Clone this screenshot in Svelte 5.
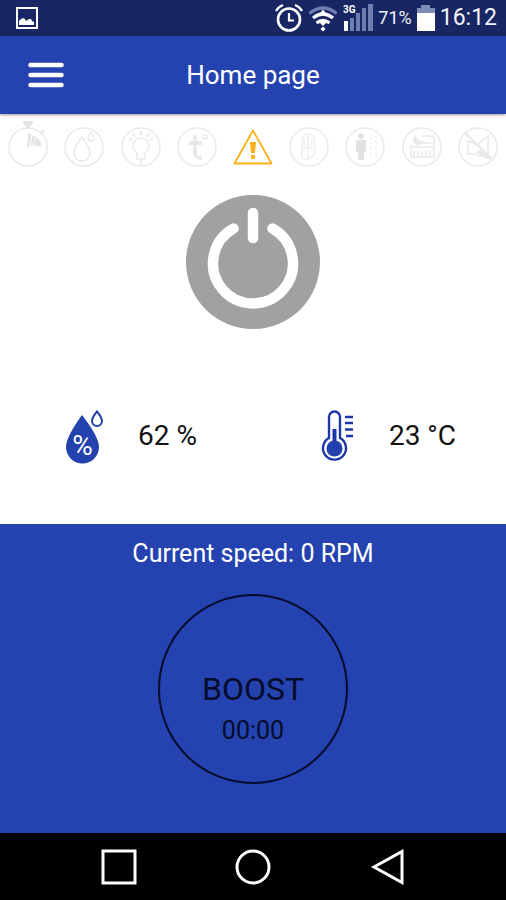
<script>
  const speed = 0;
  const humidity = 62;
  const temperature = 23;
  const indicators = ['timer', 'humidity', 'light', 'temperature', 'alarm', 'air', 'motion', 'schedule', 'mute'];
</script>

<div class="screen">
  <div class="status">
    <svg class="picture" width="22" height="22" viewBox="0 0 22 22" aria-label="Picture">
      <rect x="1" y="1" width="20" height="20" fill="none" stroke="#fff" stroke-width="2" />
      <path d="M3 18v-4l2-2 2-1 2 1 1 2 3-2 2 0 1 2 2 1v3z" fill="#fff" />
    </svg>
    <div class="status-right">
      <svg width="28" height="28" viewBox="0 0 28 28" aria-label="Alarm">
        <g fill="none" stroke="#fff" stroke-width="2.6">
          <circle cx="14" cy="15.5" r="11" />
          <path d="M14 9v7.500h5M1 7q2-4 7-6M27 7q-2-4-7-6" stroke-width="2.200" />
        </g>
      </svg>
      <svg width="30" height="28" viewBox="0 0 30 28" aria-label="Wi-Fi">
        <g fill="none" stroke="#fff" stroke-width="3.200">
          <path d="M1.500 9.500q13.500-11 27 0" stroke="#6f7db0" />
          <path d="M5 14q10-8 20 0M8.500 19q6.500-5 13 0" />
        </g>
        <path d="M15 5.500l-4.500 5.500h9zM15 22l-4-4h8zM15 22.500l2.500 2.500-2.500 2.500-2.500-2.500z" fill="#fff" />
      </svg>
      <svg width="30" height="28" viewBox="0 0 30 28" aria-label="Mobile signal">
        <g fill="#6f7db0">
          <rect x="7" y="14" width="4" height="13" /><rect x="13" y="9" width="4" height="18" />
          <rect x="19" y="4" width="4" height="23" /><rect x="25" y="0" width="5" height="27" />
        </g>
        <rect x="1" y="17" width="4" height="10" fill="#fff" />
        <text x="0" y="9" font-size="10" font-weight="700" fill="#fff">3G</text>
      </svg>
      <span class="charge">71%</span>
      <svg width="18" height="28" viewBox="0 0 18 28" aria-label="Battery">
        <path d="M0 4h4V1h9v3h5v6H0z" fill="#7f8bb7" />
        <rect y="9" width="18" height="18" fill="#fff" />
      </svg>
      <span class="clock">16:12</span>
    </div>
  </div>

  <header>
    <button class="menu" aria-label="Menu">
      <svg width="36" height="26" viewBox="0 0 36 26">
        <path d="M2.500 3h31M2.500 13h31M2.500 23h31" stroke="#fff" stroke-width="4.500" stroke-linecap="round" />
      </svg>
    </button>
    <h1>Home page</h1>
  </header>

  <main>
    <div class="indicators">
      {#each indicators as name}
        <svg width="44" height="56" viewBox="0 0 44 56" fill="none" stroke="#e9e9e9" stroke-width="1.500" aria-label={name}>
          {#if name !== 'alarm'}<circle cx="22" cy="28" r="19" />{/if}
          {#if name === 'timer'}
            <path d="M17 2h10v3l-3 2v2h-4V7l-3-2zM22 14l4 2q9 3 10 12l-7-2-8 3zM34 12l4-1-1 4z" fill="#e4e4e4" stroke="none" />
            <path d="M26 16l-2 12M30 19l-5 9" stroke="#fff" stroke-width="1" />
          {:else if name === 'humidity'}
            <path d="M20 18q-8 11-8 16a8 8 0 0 0 16 0q0-5-8-16zM29 13q-3 4-3 6a3 3 0 0 0 6 0q0-2-3-6z" />
          {:else if name === 'light'}
            <path d="M18 40v-6q-4-3-4-7a8 8 0 0 1 16 0q0 4-4 7v6zM22 40v7" />
            <path d="M10 19l3 2M14 14l2 4M22 12v4M30 14l-2 4M34 19l-3 2" stroke-width="2" />
          {:else if name === 'temperature'}
            <path d="M20 16v18q0 5 7 5M14 24h13" stroke-width="4" />
            <circle cx="30" cy="18" r="2" />
          {:else if name === 'alarm'}
            <path d="M22 11.500L40.500 44.500h-37z" stroke="#fbb11b" stroke-width="1.800" stroke-linejoin="round" />
            <path d="M19 23h6l-1 11h-4z" fill="#fbb11b" stroke="none" />
            <circle cx="22" cy="38" r="2.300" fill="#fbb11b" stroke="none" />
          {:else if name === 'air'}
            <path d="M15 38V22q1-7 6-8q6 1 7 8v13l-8 6zM21 15v14M15 31l6-3 6 2M21 29v11M17 20v8M25 19v8" stroke-width="1.200" />
          {:else if name === 'motion'}
            <path d="M13 21h10v12h-2v8h-6v-8h-2z" fill="#e2e2e2" stroke="none" />
            <circle cx="18" cy="17" r="3" fill="#e2e2e2" stroke="none" />
            <path d="M28 18v20M33 17v22" stroke-width="1.200" stroke-dasharray="2 3" />
          {:else if name === 'schedule'}
            <path d="M11 26v12h23V17H22M10 28h24M23 24h8M14 38v-6M18 38v-6M22 38v-6M26 38v-6M30 38v-6" />
            <path d="M15 17q-3 6 2 8q4 1 6-2q-6 0-8-6z" fill="#e9e9e9" />
          {:else}
            <path d="M12 22v13h6l14 4V17L21 26l-9-4z" />
            <path d="M9 14l27 26" stroke-width="2" />
            <path d="M20 33l5-2 10 8-1 2z" fill="#e7e7e7" stroke="none" />
          {/if}
        </svg>
      {/each}
    </div>

    <button class="power" aria-label="Power">
      <svg width="134" height="134" viewBox="0 0 134 134">
        <circle cx="67" cy="67" r="67" fill="#a1a1a1" />
        <path d="M47.500 33.500A40 40 0 1 0 86.500 33.500M67 18v25" fill="none" stroke="#fff" stroke-width="10.500" stroke-linecap="round" />
      </svg>
    </button>

    <div class="readings">
      <div class="reading">
        <svg width="52" height="56" viewBox="0 0 52 56" aria-label="Humidity">
          <path d="M24 7Q8 29 8 39a16.500 16.500 0 0 0 33 0Q41 29 24 7z" fill="#2342ae" />
          <path d="M39 3.500q-5 6-5 9.500a5 5 0 0 0 10 0q0-3.500-5-9.500z" fill="#fff" stroke="#2342ae" stroke-width="2" />
          <text x="24.500" y="47" text-anchor="middle" font-size="28" fill="#fff">%</text>
        </svg>
        <span>{humidity} %</span>
      </div>
      <div class="reading">
        <svg width="52" height="56" viewBox="0 0 52 56" fill="none" stroke="#1e36ab" aria-label="Temperature">
          <path d="M20 30V9a5.500 5.500 0 0 1 11 0V30a11.500 11.500 0 1 1-11 0z" stroke-width="2.400" />
          <path d="M25.500 21v18" stroke-width="4" />
          <circle cx="25.500" cy="40.500" r="8" fill="#2342ae" stroke="none" />
          <path d="M36 9h8M36 15h8M36 21.500h8M37 28h7" stroke-width="2.300" />
        </svg>
        <span>{temperature} °C</span>
      </div>
    </div>
  </main>

  <section>
    <p>Current speed: {speed} RPM</p>
    <button class="boost">
      <span class="boost-name">BOOST</span>
      <span class="boost-time">00:00</span>
    </button>
  </section>

  <nav>
    <button aria-label="Recent apps">
      <svg width="36" height="36" viewBox="0 0 36 36"><rect x="2" y="2" width="32" height="32" /></svg>
    </button>
    <button aria-label="Home">
      <svg width="36" height="36" viewBox="0 0 36 36"><circle cx="18" cy="18" r="16" /></svg>
    </button>
    <button aria-label="Back">
      <svg width="36" height="36" viewBox="0 0 36 36"><path d="M33 2.500v31L5 18z" /></svg>
    </button>
  </nav>
</div>

<style>
  .screen {
    display: flex;
    flex-direction: column;
    min-height: 100vh;
    background: #fff;
    color: #111;
    font-family: Roboto, "Liberation Sans", sans-serif;
  }
  svg {
    display: block;
    flex: none;
  }
  button {
    padding: 0;
    border: 0;
    background: none;
    color: inherit;
    font: inherit;
    cursor: pointer;
  }
  .status {
    display: flex;
    align-items: center;
    justify-content: space-between;
    height: 36px;
    padding: 0 9px 0 16px;
    background: #182663;
    color: #f1f3fb;
  }
  .status-right {
    display: flex;
    align-items: center;
    gap: 5px;
  }
  .charge {
    font-size: 18px;
    line-height: 24px;
  }
  .clock {
    font-size: 23px;
    line-height: 24px;
  }
  header {
    display: grid;
    grid-template-columns: 64px 1fr 64px;
    align-items: center;
    height: 78px;
    background: #2443b0;
    color: #fff;
    box-shadow: 0 1px 3px #0006;
  }
  .menu {
    justify-self: end;
  }
  h1 {
    margin: 0;
    font-size: 26px;
    line-height: 32px;
    font-weight: 400;
    text-align: center;
  }
  main {
    display: flex;
    flex-direction: column;
    align-items: center;
    flex: 1;
    padding-top: 5px;
  }
  .indicators {
    display: grid;
    grid-template-columns: repeat(9, 1fr);
    justify-items: center;
    width: 100%;
  }
  .power {
    margin-top: 20px;
    border-radius: 50%;
  }
  .readings {
    display: flex;
    justify-content: space-between;
    box-sizing: border-box;
    width: 100%;
    margin-top: 79px;
    padding: 0 50px 60px 58px;
  }
  .reading {
    display: flex;
    align-items: center;
    gap: 28px;
    font-size: 28px;
    line-height: 32px;
  }
  section {
    display: flex;
    flex-direction: column;
    align-items: center;
    padding: 14px 0 49px;
    background: #2443b0;
  }
  p {
    margin: 0 0 24px;
    color: #fff;
    font-size: 25px;
    line-height: 32px;
  }
  .boost {
    display: flex;
    flex-direction: column;
    align-items: center;
    box-sizing: border-box;
    width: 190px;
    height: 190px;
    padding-top: 72px;
    border: 2px solid #050b2a;
    border-radius: 50%;
    color: #050b2a;
  }
  .boost-name {
    font-size: 32px;
    line-height: 42px;
  }
  .boost-time {
    font-size: 25px;
    line-height: 42px;
  }
  nav {
    display: flex;
    align-items: center;
    justify-content: center;
    gap: 98px;
    height: 67px;
    background: #000;
  }
  nav svg {
    fill: none;
    stroke: #fff;
    stroke-width: 3;
  }
</style>
